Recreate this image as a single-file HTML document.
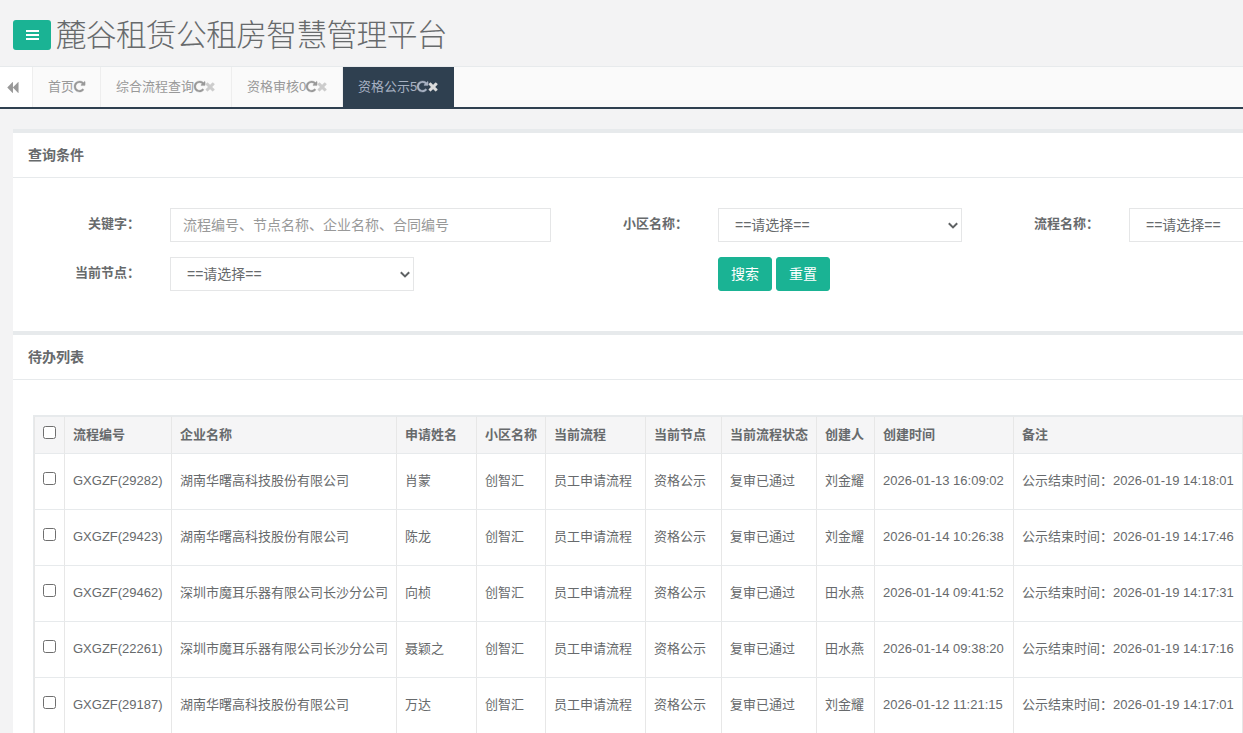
<!DOCTYPE html>
<html lang="zh-CN">
<head>
<meta charset="utf-8">
<title>麓谷租赁公租房智慧管理平台</title>
<style>
*{box-sizing:border-box;}
html,body{margin:0;padding:0;}
body{width:1243px;height:733px;overflow:hidden;background:#f3f3f4;color:#676a6c;
 font-family:"Liberation Sans","Noto Sans CJK SC",sans-serif;font-size:13px;line-height:1.42857;position:relative;}
#page{position:absolute;left:0;top:0;width:1680px;height:733px;overflow:hidden;}
/* header */
.menu-btn{position:absolute;left:13px;top:20px;width:38px;height:30px;border-radius:3px;background:#1ab394;}
.menu-btn i{position:absolute;left:13px;width:13px;height:2px;background:#fff;display:block;}
.title{position:absolute;left:55.8px;top:14px;margin:0;font-size:30.8px;font-weight:300;line-height:44px;color:#676a6c;white-space:nowrap;letter-spacing:-0.72px;}
/* tabs */
.tabs{position:absolute;left:0;top:66px;width:1680px;height:43px;border-top:1px solid #e7eaec;border-bottom:2px solid #2f4050;background:#fafafa;}
.roll{position:absolute;left:0;top:0;width:33px;height:40px;background:#fff;border-right:1px solid #eee;}
.roll svg{position:absolute;left:5.5px;top:14px;}
.tablist{position:absolute;left:33px;top:0;height:40px;white-space:nowrap;font-size:0;}
.tab{display:inline-block;height:40px;line-height:40px;padding:0 0 0 15px;font-size:13px;color:#999;background:#fafafa;border-right:1px solid #eee;vertical-align:top;}
.tab.active{background:#2f4050;color:#a7b1c2;border-right-color:#2f4050;}
.tab svg.fa{display:inline-block;height:13px;vertical-align:-1.857px;overflow:visible;}
.tab svg.fa path{stroke-width:45;stroke-linejoin:round;}
/* ibox */
.ibox{position:absolute;left:13px;width:1654px;background:#fff;}
.ibox-title{height:48px;border-top:4px solid #e7eaec;padding:13px 15px 0;font-weight:bold;font-size:13px;color:#676a6c;}
.ibox-title h5{margin:0;font-size:14px;line-height:18px;font-weight:bold;}
.ibox-content{border-top:1px solid #e7eaec;position:relative;}
label.lb{position:absolute;font-weight:bold;text-align:right;width:107px;line-height:18px;white-space:nowrap;}
.ctl{position:absolute;height:34px;border:1px solid #e5e6e7;border-radius:0;background:#fff;font-size:14px;color:#676a6c;padding:6px 12px 6px;line-height:20px;font-family:inherit;white-space:nowrap;overflow:hidden;}
.ctl.ph{color:#999;}
.ctl .arrow{position:absolute;right:3px;top:12.5px;}
.btn{position:absolute;top:0;height:34px;width:54px;border-radius:3px;background:#1ab394;border:1px solid #1ab394;color:#fff;font-size:14px;line-height:20px;padding:6px 0;text-align:center;}
/* table */
table{position:absolute;left:20px;top:35px;border-collapse:separate;border-spacing:0;border-top:1px solid #e7eaec;border-left:1px solid #e7eaec;border-right:1px solid #e7eaec;table-layout:fixed;width:1211px;}
th,td{border-left:1px solid #e7e7e7;border-top:1px solid #e7eaec;padding:0 8px;text-align:left;vertical-align:middle;white-space:nowrap;overflow:hidden;font-size:13px;}
th:last-child,td:last-child{border-right:1px solid #e7e7e7;}
th{background:#f5f5f6;font-weight:bold;height:37px;}
td{height:56px;}
.cb{display:block;width:13px;height:13px;border:1px solid #6f6f6f;border-radius:2.5px;background:#fff;position:relative;top:-3px;}
th .cb{top:-3px;}
</style>
</head>
<body>
<div id="page">
  <div class="menu-btn"><i style="top:10px"></i><i style="top:14px"></i><i style="top:18px"></i></div>
  <h2 class="title">麓谷租赁公租房智慧管理平台</h2>

  <div class="tabs">
    <div class="roll"><svg width="13" height="13" viewBox="0 0 1792 1792"><path d="M1683 141q19-19 32-13t13 32v1472q0 26-13 32t-32-13l-710-710q-9-9-13-19v710q0 26-13 32t-32-13l-710-710q-19-19-19-45t19-45l710-710q19-19 32-13t13 32v710q4-10 13-19z" fill="#999"/></svg></div>
    <div class="tablist">
      <span class="tab" style="width:68px">首页<svg class="fa" style="width:11.14px" viewBox="128 0 1536 1792"><path d="M1664 256v448q0 26-19 45t-45 19h-448q-42 0-59-40-17-39 14-69l138-138q-148-137-349-137-104 0-198.500 40.500t-163.500 109.500-109.500 163.500-40.500 198.500 40.500 198.500 109.500 163.500 163.500 109.500 198.500 40.500q119 0 225-52t179-147q7-10 23-12 15 0 25 9l137 138q9 8 9.500 20.500t-7.500 22.500q-109 132-264 204.500t-327 72.500q-156 0-298-61t-245-164-164-245-61-298 61-298 164-245 245-164 298-61q147 0 284.500 55.500t244.500 156.500l130-129q29-31 70-14 39 17 39 59z" fill="#999" stroke="#999"/></svg></span><span class="tab" style="width:131px">综合流程查询<svg class="fa" style="width:11.14px" viewBox="128 0 1536 1792"><path d="M1664 256v448q0 26-19 45t-45 19h-448q-42 0-59-40-17-39 14-69l138-138q-148-137-349-137-104 0-198.500 40.500t-163.500 109.500-109.500 163.500-40.500 198.500 40.500 198.500 109.500 163.500 163.500 109.500 198.500 40.500q119 0 225-52t179-147q7-10 23-12 15 0 25 9l137 138q9 8 9.500 20.500t-7.500 22.500q-109 132-264 204.500t-327 72.500q-156 0-298-61t-245-164-164-245-61-298 61-298 164-245 245-164 298-61q147 0 284.500 55.500t244.500 156.500l130-129q29-31 70-14 39 17 39 59z" fill="#999" stroke="#999"/></svg><svg class="fa" style="width:10.21px" viewBox="192 0 1408 1792"><path d="M1490 1322q0 40-28 68l-136 136q-28 28-68 28t-68-28l-294-294-294 294q-28 28-68 28t-68-28l-136-136q-28-28-28-68t28-68l294-294-294-294q-28-28-28-68t28-68l136-136q28-28 68-28t68 28l294 294 294-294q28-28 68-28t68 28l136 136q28 28 28 68t-28 68l-294 294 294 294q28 28 28 68z" fill="#ccc" stroke="#ccc"/></svg></span><span class="tab" style="width:111px">资格审核0<svg class="fa" style="width:11.14px" viewBox="128 0 1536 1792"><path d="M1664 256v448q0 26-19 45t-45 19h-448q-42 0-59-40-17-39 14-69l138-138q-148-137-349-137-104 0-198.500 40.500t-163.500 109.500-109.500 163.500-40.500 198.500 40.500 198.500 109.500 163.500 163.500 109.500 198.500 40.500q119 0 225-52t179-147q7-10 23-12 15 0 25 9l137 138q9 8 9.500 20.500t-7.500 22.500q-109 132-264 204.500t-327 72.500q-156 0-298-61t-245-164-164-245-61-298 61-298 164-245 245-164 298-61q147 0 284.500 55.500t244.500 156.500l130-129q29-31 70-14 39 17 39 59z" fill="#999" stroke="#999"/></svg><svg class="fa" style="width:10.21px" viewBox="192 0 1408 1792"><path d="M1490 1322q0 40-28 68l-136 136q-28 28-68 28t-68-28l-294-294-294 294q-28 28-68 28t-68-28l-136-136q-28-28-28-68t28-68l294-294-294-294q-28-28-28-68t28-68l136-136q28-28 68-28t68 28l294 294 294-294q28-28 68-28t68 28l136 136q28 28 28 68t-28 68l-294 294 294 294q28 28 28 68z" fill="#ccc" stroke="#ccc"/></svg></span><span class="tab active" style="width:111px">资格公示5<svg class="fa" style="width:11.14px" viewBox="128 0 1536 1792"><path d="M1664 256v448q0 26-19 45t-45 19h-448q-42 0-59-40-17-39 14-69l138-138q-148-137-349-137-104 0-198.500 40.500t-163.500 109.500-109.500 163.500-40.500 198.500 40.500 198.500 109.500 163.500 163.500 109.500 198.500 40.500q119 0 225-52t179-147q7-10 23-12 15 0 25 9l137 138q9 8 9.500 20.500t-7.500 22.500q-109 132-264 204.500t-327 72.500q-156 0-298-61t-245-164-164-245-61-298 61-298 164-245 245-164 298-61q147 0 284.500 55.500t244.500 156.500l130-129q29-31 70-14 39 17 39 59z" fill="#a7b1c2" stroke="#a7b1c2"/></svg><svg class="fa" style="width:10.21px" viewBox="192 0 1408 1792"><path d="M1490 1322q0 40-28 68l-136 136q-28 28-68 28t-68-28l-294-294-294 294q-28 28-68 28t-68-28l-136-136q-28-28-28-68t28-68l294-294-294-294q-28-28-28-68t28-68l136-136q28-28 68-28t68 28l294 294 294-294q28-28 68-28t68 28l136 136q28 28 28 68t-28 68l-294 294 294 294q28 28 28 68z" fill="#dcdcdc" stroke="#dcdcdc"/></svg></span>
    </div>
  </div>

  <div class="ibox" style="top:129px;height:202px;">
    <div class="ibox-title"><h5>查询条件</h5></div>
    <div class="ibox-content" style="height:154px;">
      <label class="lb" style="left:20px;top:37px;">关键字：</label>
      <div class="ctl ph" style="left:157px;top:30px;width:381px;">流程编号、节点名称、企业名称、合同编号</div>
      <label class="lb" style="left:568px;top:37px;">小区名称：</label>
      <div class="ctl" style="left:705px;top:30px;width:244px;padding-left:16px;">==请选择==<svg class="arrow" width="10" height="8" viewBox="0 0 10 8"><path d="M0.8 1.2l4.2 4.2 4.2-4.2" fill="none" stroke="#5f6264" stroke-width="2"/></svg></div>
      <label class="lb" style="left:979px;top:37px;">流程名称：</label>
      <div class="ctl" style="left:1116px;top:30px;width:244px;padding-left:16px;">==请选择==</div>
      <label class="lb" style="left:20px;top:86px;">当前节点：</label>
      <div class="ctl" style="left:157px;top:79px;width:244px;padding-left:16px;">==请选择==<svg class="arrow" width="10" height="8" viewBox="0 0 10 8"><path d="M0.8 1.2l4.2 4.2 4.2-4.2" fill="none" stroke="#5f6264" stroke-width="2"/></svg></div>
      <div style="position:absolute;left:705px;top:79px;"><div class="btn" style="left:0;">搜索</div><div class="btn" style="left:58px;">重置</div></div>
    </div>
  </div>

  <div class="ibox" style="top:331px;height:420px;">
    <div class="ibox-title"><h5>待办列表</h5></div>
    <div class="ibox-content" style="height:372px;">
      <table>
        <colgroup><col style="width:30px"><col style="width:107px"><col style="width:225px"><col style="width:80px"><col style="width:69px"><col style="width:100px"><col style="width:76px"><col style="width:95px"><col style="width:58px"><col style="width:139px"><col style="width:230px"></colgroup>
        <thead><tr><th><span class="cb"></span></th><th>流程编号</th><th>企业名称</th><th>申请姓名</th><th>小区名称</th><th>当前流程</th><th>当前节点</th><th>当前流程状态</th><th>创建人</th><th>创建时间</th><th>备注</th></tr></thead>
        <tbody>
        <tr><td><span class="cb"></span></td><td>GXGZF(29282)</td><td>湖南华曙高科技股份有限公司</td><td>肖蒙</td><td>创智汇</td><td>员工申请流程</td><td>资格公示</td><td>复审已通过</td><td>刘金耀</td><td>2026-01-13 16:09:02</td><td>公示结束时间：2026-01-19 14:18:01</td></tr>
        <tr><td><span class="cb"></span></td><td>GXGZF(29423)</td><td>湖南华曙高科技股份有限公司</td><td>陈龙</td><td>创智汇</td><td>员工申请流程</td><td>资格公示</td><td>复审已通过</td><td>刘金耀</td><td>2026-01-14 10:26:38</td><td>公示结束时间：2026-01-19 14:17:46</td></tr>
        <tr><td><span class="cb"></span></td><td>GXGZF(29462)</td><td>深圳市魔耳乐器有限公司长沙分公司</td><td>向桢</td><td>创智汇</td><td>员工申请流程</td><td>资格公示</td><td>复审已通过</td><td>田水燕</td><td>2026-01-14 09:41:52</td><td>公示结束时间：2026-01-19 14:17:31</td></tr>
        <tr><td><span class="cb"></span></td><td>GXGZF(22261)</td><td>深圳市魔耳乐器有限公司长沙分公司</td><td>聂颖之</td><td>创智汇</td><td>员工申请流程</td><td>资格公示</td><td>复审已通过</td><td>田水燕</td><td>2026-01-14 09:38:20</td><td>公示结束时间：2026-01-19 14:17:16</td></tr>
        <tr><td><span class="cb"></span></td><td>GXGZF(29187)</td><td>湖南华曙高科技股份有限公司</td><td>万达</td><td>创智汇</td><td>员工申请流程</td><td>资格公示</td><td>复审已通过</td><td>刘金耀</td><td>2026-01-12 11:21:15</td><td>公示结束时间：2026-01-19 14:17:01</td></tr>
        </tbody>
      </table>
    </div>
  </div>
</div>
</body>
</html>
